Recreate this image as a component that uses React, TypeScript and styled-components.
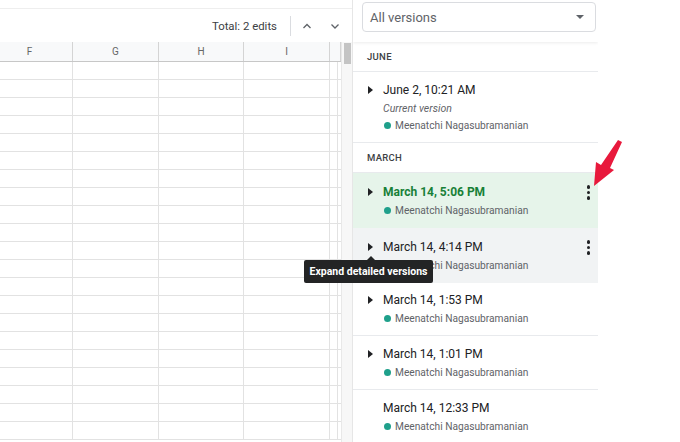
import styled, { createGlobalStyle } from 'styled-components';

const GlobalStyle = createGlobalStyle`
  html, body { margin: 0; padding: 0; background: #fff; }
  body { font-family: Roboto, "Noto Sans", Arial, sans-serif; }
`;

const Screen = styled.div`
  position: relative;
  display: flex;
  width: 680px;
  height: 442px;
  overflow: hidden;
  background: #fff;
`;

const Sheet = styled.div`
  display: flex;
  flex-direction: column;
  width: 352px;
  flex-shrink: 0;
  overflow: hidden;
`;

const TopStrip = styled.div`
  height: 9px;
  flex-shrink: 0;
  border-bottom: 1px solid #eeeeee;
  box-sizing: border-box;
`;

const Toolbar = styled.div`
  height: 33px;
  flex-shrink: 0;
  display: flex;
  align-items: center;
  justify-content: flex-end;
  padding-right: 9px;
  color: #3c4043;
  font-size: 11.4px;
`;

const Divider = styled.div`
  width: 1px;
  height: 20px;
  background: #dadce0;
  margin: 0 8px 0 13px;
`;

const NavButton = styled.div<{ $gap?: number }>`
  width: 16px;
  height: 16px;
  display: flex;
  align-items: center;
  justify-content: center;
  margin-left: ${(p) => p.$gap ?? 0}px;
`;

const GridArea = styled.div`
  flex: 1;
  display: flex;
  min-height: 0;
`;

const Grid = styled.div`
  width: 341px;
  display: flex;
  flex-direction: column;
`;

const HeaderRow = styled.div`
  display: grid;
  grid-template-columns: 73px 86px 85px 86px 11px;
  height: 20px;
  flex-shrink: 0;
  background: #f8f9fa;
  border-bottom: 1px solid #c7c7c7;
  box-sizing: border-box;
`;

const HeaderCell = styled.div<{ $shift?: number }>`
  display: flex;
  align-items: center;
  justify-content: center;
  border-right: 1px solid #d4d4d4;
  color: #666;
  font-size: 10px;
  padding-right: ${(p) => p.$shift ?? 0}px;
`;

const Row = styled.div`
  display: grid;
  grid-template-columns: 73px 86px 85px 86px 8px;
  height: 18px;
  flex-shrink: 0;
  border-bottom: 1px solid #e2e2e2;
  box-sizing: border-box;
`;

const Cell = styled.div`
  border-right: 1px solid #e2e2e2;
`;

const ScrollTrack = styled.div`
  width: 11px;
  background: #f7f7f7;
  border-left: 1px solid #e8e8e8;
  box-sizing: border-box;
  padding: 1px 1px 0 2px;
`;

const ScrollThumb = styled.div`
  height: 21px;
  background: #c4c4c4;
`;

const Panel = styled.div`
  width: 246px;
  flex-shrink: 0;
  display: flex;
  flex-direction: column;
  border-left: 1px solid #e6e6e6;
  box-sizing: border-box;
  overflow: hidden;
  & > * { flex-shrink: 0; }
`;

const PanelHeader = styled.div`
  height: 42px;
  padding: 2px 2px 0 9px;
  box-sizing: border-box;
  box-shadow: 0 1px 3px rgba(0, 0, 0, 0.08);
  position: relative;
  z-index: 1;
`;

const Select = styled.div`
  height: 30px;
  border: 1px solid #dadce0;
  border-radius: 4px;
  display: flex;
  align-items: center;
  justify-content: space-between;
  padding: 0 11px 0 7px;
  color: #5f6368;
  font-size: 13px;
  box-sizing: border-box;
`;

const Caret = styled.div`
  width: 0;
  height: 0;
  border-left: 4px solid transparent;
  border-right: 4px solid transparent;
  border-top: 4px solid #5f6368;
`;

const SectionTitle = styled.div`
  height: 30px;
  display: flex;
  align-items: center;
  padding-left: 14px;
  font-size: 9.5px;
  font-weight: 500;
  letter-spacing: 0.3px;
  color: #3c4043;
  border-bottom: 1px solid #e8eaed;
  box-sizing: border-box;
`;

const Version = styled.div<{ $state?: 'selected' | 'hover'; $top?: number }>`
  position: relative;
  padding: ${(p) => p.$top ?? 10}px 0 9px 30px;
  border-bottom: 1px solid
    ${(p) => (p.$state ? 'transparent' : '#e8eaed')};
  background: ${(p) =>
    p.$state === 'selected' ? '#e6f4ea' : p.$state === 'hover' ? '#f1f3f4' : '#fff'};
  box-sizing: border-box;
`;

const Title = styled.div<{ $selected?: boolean }>`
  position: relative;
  height: 18px;
  display: flex;
  align-items: center;
  font-size: 12px;
  font-weight: ${(p) => (p.$selected ? 700 : 400)};
  color: ${(p) => (p.$selected ? '#188038' : '#202124')};
`;

const Expander = styled.span`
  position: absolute;
  left: -15px;
  top: 5px;
  width: 0;
  height: 0;
  border-top: 4px solid transparent;
  border-bottom: 4px solid transparent;
  border-left: 5px solid #202124;
`;

const Note = styled.div`
  height: 16px;
  margin-top: 1px;
  display: flex;
  align-items: center;
  font-size: 10.5px;
  font-style: italic;
  color: #5f6368;
`;

const Author = styled.div`
  height: 16px;
  margin-top: 1px;
  display: flex;
  align-items: center;
  gap: 4px;
  font-size: 10.2px;
  color: #5f6368;
`;

const Dot = styled.span`
  width: 7px;
  height: 7px;
  border-radius: 50%;
  background: #1fa08b;
  margin-left: 1px;
`;

const Kebab = styled.div`
  position: absolute;
  right: 8px;
  top: 12px;
  display: flex;
  flex-direction: column;
  gap: 2px;
  & span {
    width: 3.5px;
    height: 3.5px;
    border-radius: 50%;
    background: #202124;
  }
`;

const Tooltip = styled.div`
  position: absolute;
  left: 304px;
  top: 260px;
  width: 129px;
  height: 23px;
  background: #232425;
  border-radius: 2px;
  color: #fff;
  font-size: 10.5px;
  font-weight: 700;
  display: flex;
  align-items: center;
  justify-content: center;
  z-index: 3;
  &::before {
    content: '';
    position: absolute;
    left: 63px;
    top: -4px;
    border-left: 4px solid transparent;
    border-right: 4px solid transparent;
    border-bottom: 4px solid #232425;
  }
`;

const Pointer = styled.svg`
  position: absolute;
  left: 585px;
  top: 135px;
  z-index: 3;
`;

const rows = Array.from({ length: 21 });

type Entry = {
  time: string;
  state?: 'selected' | 'hover';
  expand: boolean;
  menu?: boolean;
  top?: number;
};

const versions: Entry[] = [
  { time: 'March 14, 5:06 PM', state: 'selected', expand: true, menu: true },
  { time: 'March 14, 4:14 PM', state: 'hover', expand: true, menu: true },
  { time: 'March 14, 1:53 PM', expand: true, top: 8 },
  { time: 'March 14, 1:01 PM', expand: true, top: 9 },
  { time: 'March 14, 12:33 PM', expand: false, top: 9 },
];

const Chevron = ({ up }: { up?: boolean }) => (
  <svg width="10" height="8" viewBox="0 0 10 8">
    <polyline
      points={up ? '1.5,6 5,2.5 8.5,6' : '1.5,2.5 5,6 8.5,2.5'}
      fill="none"
      stroke="#5f6368"
      strokeWidth="1.3"
    />
  </svg>
);

export default function App() {
  return (
    <Screen>
      <GlobalStyle />
      <Sheet>
        <TopStrip />
        <Toolbar>
          <span>Total: 2 edits</span>
          <Divider />
          <NavButton><Chevron up /></NavButton>
          <NavButton $gap={12}><Chevron /></NavButton>
        </Toolbar>
        <GridArea>
          <Grid>
            <HeaderRow>
              <HeaderCell $shift={13}>F</HeaderCell>
              <HeaderCell>G</HeaderCell>
              <HeaderCell>H</HeaderCell>
              <HeaderCell>I</HeaderCell>
              <HeaderCell />
            </HeaderRow>
            {rows.map((_, i) => (
              <Row key={i}>
                <Cell />
                <Cell />
                <Cell />
                <Cell />
                <Cell />
              </Row>
            ))}
          </Grid>
          <ScrollTrack>
            <ScrollThumb />
          </ScrollTrack>
        </GridArea>
      </Sheet>

      <Panel>
        <PanelHeader>
          <Select>
            <span>All versions</span>
            <Caret />
          </Select>
        </PanelHeader>
        <SectionTitle>JUNE</SectionTitle>
        <Version $top={9}>
          <Title>
            <Expander />
            June 2, 10:21 AM
          </Title>
          <Note>Current version</Note>
          <Author>
            <Dot />
            Meenatchi Nagasubramanian
          </Author>
        </Version>
        <SectionTitle>MARCH</SectionTitle>
        {versions.map((v) => (
          <Version key={v.time} $state={v.state} $top={v.top}>
            <Title $selected={v.state === 'selected'}>
              {v.expand && <Expander />}
              {v.time}
            </Title>
            <Author>
              <Dot />
              Meenatchi Nagasubramanian
            </Author>
            {v.menu && (
              <Kebab>
                <span />
                <span />
                <span />
              </Kebab>
            )}
          </Version>
        ))}
      </Panel>

      <Tooltip>Expand detailed versions</Tooltip>

      <Pointer width="45" height="56" viewBox="0 0 45 56">
        <polygon
          points="33,5 37,7 25,33 29,35 9,51 11,27 16,30"
          fill="#e8193c"
        />
      </Pointer>
    </Screen>
  );
}
